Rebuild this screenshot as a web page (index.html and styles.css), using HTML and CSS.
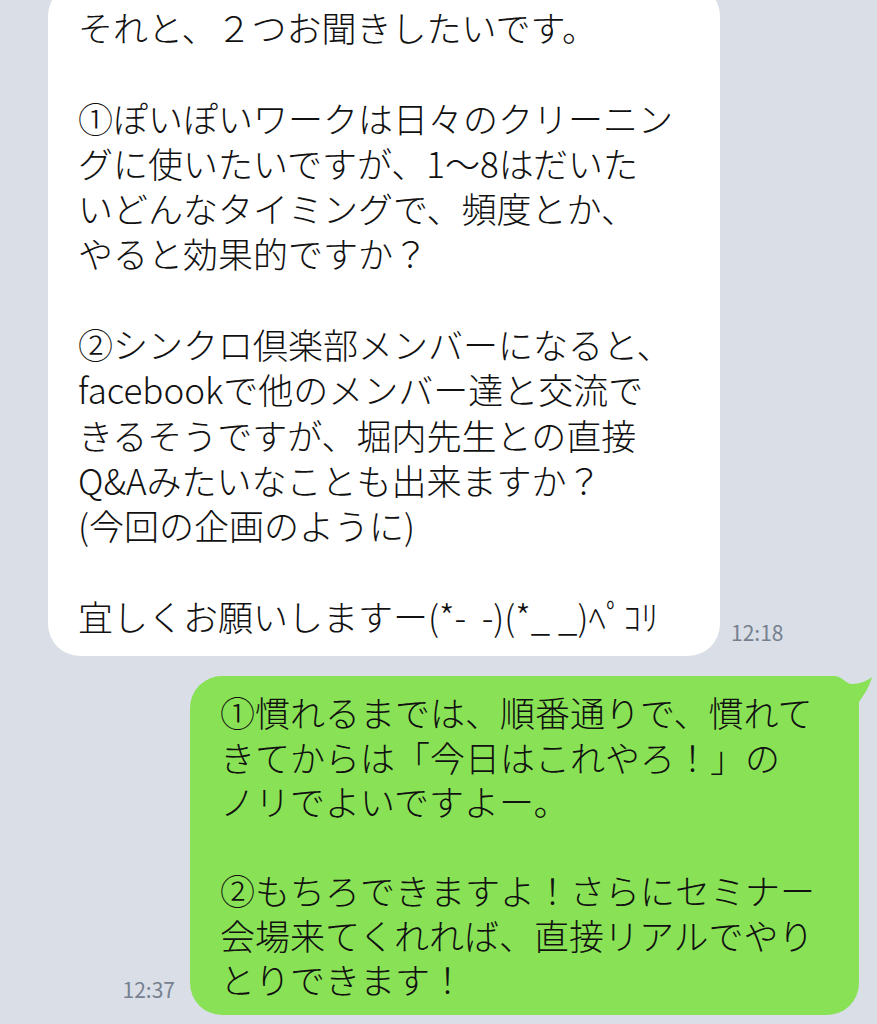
FILE: index.html
```html
<!DOCTYPE html>
<html lang="ja">
<head>
<meta charset="utf-8">
<title>chat</title>
<link rel="stylesheet" href="styles.css">
</head>
<body>
<main class="chat">
  <div class="row row-in">
    <div class="bubble bubble-in">
      <p class="line">それと、２つお聞きしたいです。</p>
      <p class="line blank">&nbsp;</p>
      <p class="line">①ぽいぽいワークは日々のクリーニン</p>
      <p class="line">グに使いたいですが、1〜8はだいた</p>
      <p class="line">いどんなタイミングで、頻度とか、</p>
      <p class="line">やると効果的ですか？</p>
      <p class="line blank">&nbsp;</p>
      <p class="line">②シンクロ倶楽部メンバーになると、</p>
      <p class="line">facebookで他のメンバー達と交流で</p>
      <p class="line">きるそうですが、堀内先生との直接</p>
      <p class="line">Q&amp;Aみたいなことも出来ますか？</p>
      <p class="line">(今回の企画のように)</p>
      <p class="line blank">&nbsp;</p>
      <p class="line">宜しくお願いしますー(*-&nbsp;&nbsp;-)(*_&nbsp;_)ﾍﾟｺﾘ</p>
    </div>
    <span class="time time-in">12:18</span>
  </div>
  <div class="row row-out">
    <span class="time time-out">12:37</span>
    <div class="bubble bubble-out">
      <svg class="tail" width="50" height="36" viewBox="0 0 50 36" aria-hidden="true">
        <path d="M0,0 L8,0 C16,0 20,8 26,8 C34,8 41,5 46,1 C43,12 37,20 33,26 L33,36 L0,36 Z" fill="#89e255"/>
      </svg>
      <p class="line">①慣れるまでは、順番通りで、慣れて</p>
      <p class="line">きてからは「今日はこれやろ！」の</p>
      <p class="line">ノリでよいですよー。</p>
      <p class="line blank">&nbsp;</p>
      <p class="line">②もちろできますよ！さらにセミナー</p>
      <p class="line">会場来てくれれば、直接リアルでやり</p>
      <p class="line">とりできます！</p>
    </div>
  </div>
</main>
</body>
</html>
```

FILE: styles.css
```css
html, body {
  margin: 0;
  padding: 0;
  background: #d9dee7;
}

body {
  width: 877px;
  height: 1024px;
  overflow: hidden;
  font-family: "Noto Sans CJK JP", "Noto Sans", sans-serif;
  font-weight: 300;
  color: #111;
}

.chat {
  display: flex;
  flex-direction: column;
  gap: 20px;
  margin-top: -16px;
}

.row {
  display: flex;
  align-items: flex-end;
}

.row-in {
  padding-left: 48px;
  gap: 11px;
}

.row-out {
  justify-content: flex-end;
  padding-right: 18px;
  gap: 15px;
}

.bubble {
  position: relative;
  box-sizing: border-box;
  font-size: 35px;
  white-space: nowrap;
}

.bubble-in {
  width: 672px;
  background: #ffffff;
  border-radius: 32px;
  padding: 20px 30px 18px 30px;
  line-height: 45.3px;
}

.bubble-out {
  width: 669px;
  background: #89e255;
  border-radius: 32px;
  padding: 14px 30px 13px 30px;
  line-height: 44.5px;
}

.line {
  margin: 0;
}

.tail {
  position: absolute;
  top: 0;
  right: -17px;
  display: block;
}

.time {
  font-family: "Noto Sans CJK JP", "Noto Sans", sans-serif;
  font-weight: 400;
  font-size: 21px;
  line-height: 21px;
  color: #76808f;
}

.time-in {
  margin-bottom: 13px;
}

.time-out {
  margin-bottom: 15px;
}
```
